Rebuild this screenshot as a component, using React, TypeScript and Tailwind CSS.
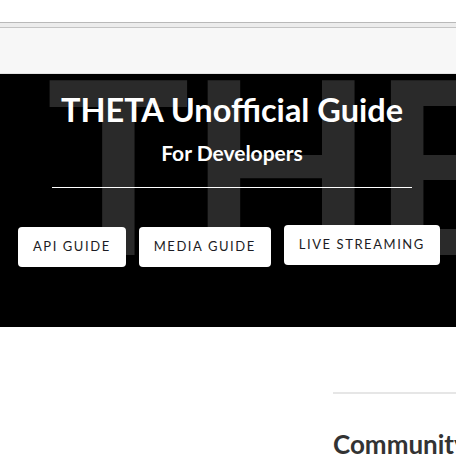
export default function App() {
  const buttons = [
    { label: "API GUIDE", extra: "mt-[2px]" },
    { label: "MEDIA GUIDE", extra: "mt-[2px]" },
    { label: "LIVE STREAMING", extra: "" },
  ];

  return (
    <div className="w-[456px] h-[457px] overflow-hidden bg-white font-['Lato',sans-serif]">
      {/* browser-ish top strip */}
      <div className="h-[23px] bg-white border-b border-[#b9b9b9]" />
      <div className="h-[5px] bg-[#ececec] border-b border-[#c4c4c4]" />
      <div className="h-[46px] bg-[#f7f7f7] border-b border-[#e3e3e3]" />

      {/* hero */}
      <section className="relative h-[253px] bg-black overflow-hidden">
        <div className="absolute left-[46px] top-[-33px] text-[241px] font-bold leading-none tracking-[-0.01em] text-[#2a2a2a] whitespace-nowrap select-none">
          THETA
        </div>
        <div className="relative flex flex-col items-center pl-[8px]">
          <h1 className="mt-[14px] text-[32.5px] font-bold leading-[44px] text-white">
            THETA Unofficial Guide
          </h1>
          <h2 className="mt-[7px] text-[21px] font-bold leading-[28px] text-white">
            For Developers
          </h2>
          <hr className="mt-[20px] w-[360px] border-0 border-t border-white" />
        </div>
        <div className="relative mt-[37px] flex items-start gap-[13px] pl-[18px]">
          {buttons.map((b) => (
            <button
              key={b.label}
              className={`h-[40px] px-[15px] rounded-[4px] bg-white text-[13px] tracking-[0.12em] text-[#1c1c24] whitespace-nowrap ${b.extra}`}
            >
              {b.label}
            </button>
          ))}
        </div>
      </section>

      {/* content */}
      <div className="flex">
        <div className="w-[333px] shrink-0" />
        <div className="flex-1 min-w-0">
          <div className="mt-[65px] h-[2px] bg-[#e6e6e6]" />
          <h3 className="mt-[31px] text-[26px] font-bold text-[#333] whitespace-nowrap">
            Community
          </h3>
        </div>
      </div>
    </div>
  );
}
